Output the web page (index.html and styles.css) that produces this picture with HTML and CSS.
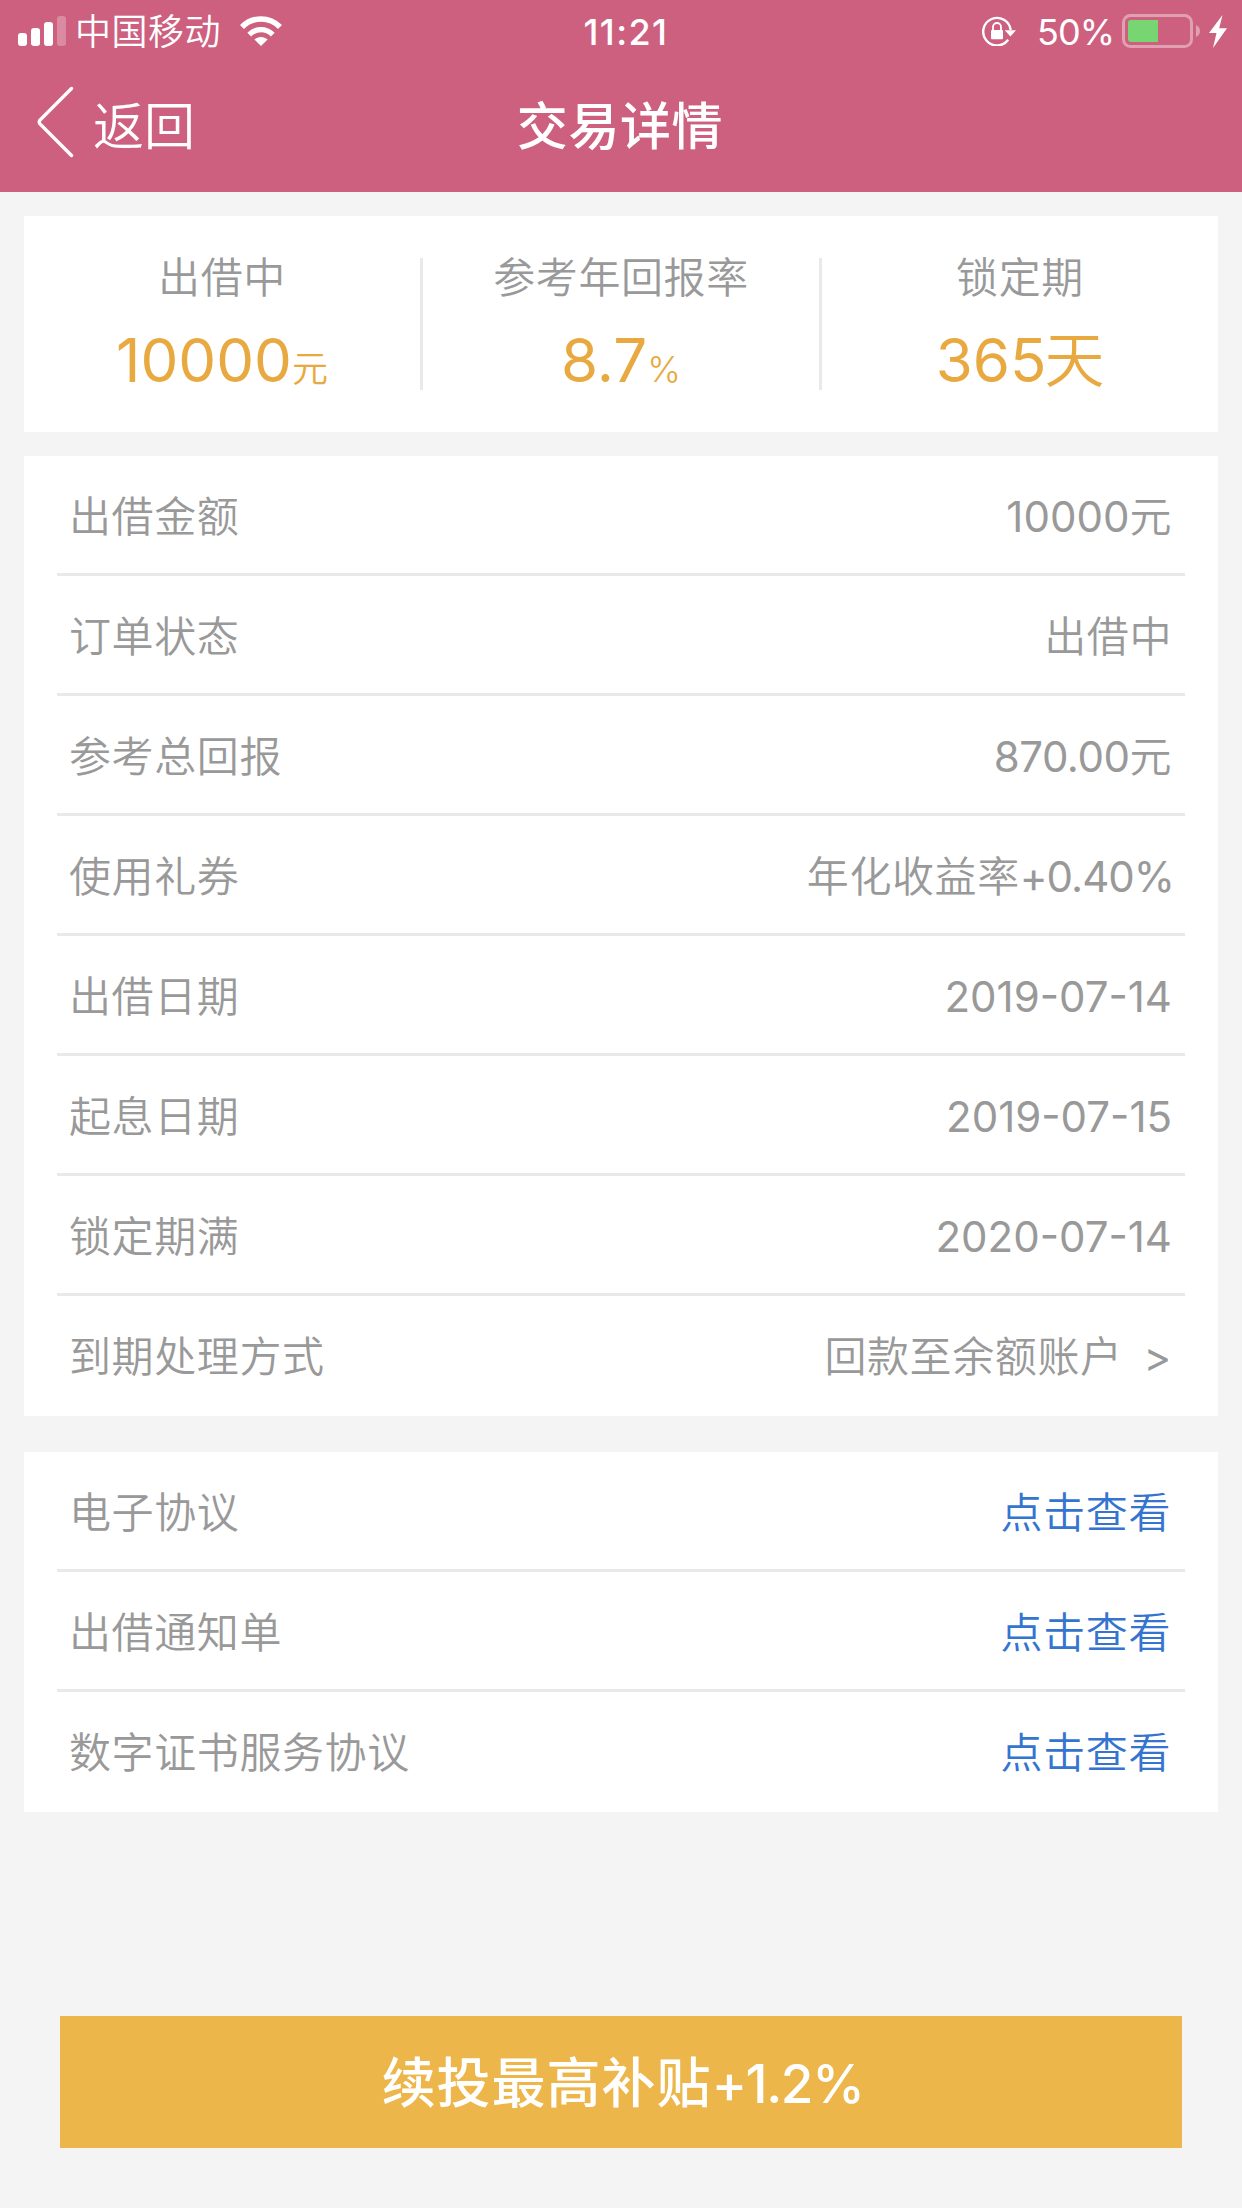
FILE: index.html
```html
<!DOCTYPE html>
<html lang="zh-CN">
<head>
<meta charset="UTF-8" />
<meta name="viewport" content="width=device-width, initial-scale=1" />
<title>交易详情</title>
<link rel="stylesheet" href="styles.css">
</head>
<body>
  <header class="header">
    <div class="status-bar">
      <div class="status-left">
        <svg class="signal" width="48" height="30" viewBox="0 0 48 30" fill="#fff">
          <rect x="0" y="17" width="9" height="13" rx="3"/>
          <rect x="13" y="12" width="9" height="18" rx="3"/>
          <rect x="26" y="6" width="9" height="24" rx="3"/>
          <rect x="39" y="0" width="9" height="30" rx="3" opacity=".27"/>
        </svg>
        <span class="carrier">中国移动</span>
        <svg class="wifi" width="42" height="30" viewBox="0 0 42 30">
          <path d="M2 11 C12.5 .3 29.5 .3 40 11" fill="none" stroke="#fff" stroke-width="5.6"/>
          <path d="M9.2 18.6 C16 12 26 12 32.8 18.6" fill="none" stroke="#fff" stroke-width="5.4"/>
          <path d="M14.4 23.6 C18 20.2 24 20.2 27.6 23.6 L21 30 Z" fill="#fff"/>
        </svg>
      </div>
      <div class="time">11:21</div>
      <div class="status-right">
        <svg class="lock" width="34" height="30" viewBox="0 0 34 30">
          <path d="M26.2 23.8 A13.8 13.8 0 1 1 28.7 14" fill="none" stroke="#fff" stroke-width="2.4"/>
          <path d="M22.8 14.2 H34 L28.4 20.4 Z" fill="#fff"/>
          <rect x="9" y="14" width="12" height="9.3" rx="1" fill="#fff"/>
          <path d="M11 14.5 V11 a4 4 0 0 1 8 0 V14.5" fill="none" stroke="#fff" stroke-width="1.8"/>
        </svg>
        <span class="percent">50%</span>
        <svg class="battery" width="78" height="34" viewBox="0 0 78 34">
          <rect x="1.5" y="1.5" width="68" height="31" rx="7" fill="none" stroke="#fff" stroke-opacity=".4" stroke-width="3"/>
          <path d="M9 6 H36 V28 H9 a3 3 0 0 1 -3 -3 V9 a3 3 0 0 1 3 -3 Z" fill="#77d572"/>
          <path d="M74 11 Q78 13 78 17 Q78 21 74 23 Z" fill="#fff" fill-opacity=".4"/>
        </svg>
        <svg class="bolt" width="18" height="33" viewBox="0 0 18 33">
          <path d="M13.5 0 L0 18 H7.5 L4 33 L18 13.2 H10.2 Z" fill="#fff"/>
        </svg>
      </div>
    </div>
    <div class="nav-bar">
      <a class="back" href="#">
        <svg class="chevron" width="37" height="72" viewBox="0 0 37 72">
          <path d="M34.5 2.5 L3 34 Q1.5 36 3 38 L34.5 69.5" fill="none" stroke="#fff" stroke-width="3.4" stroke-linecap="round"/>
        </svg>
        <span>返回</span>
      </a>
      <h1 class="title">交易详情</h1>
    </div>
  </header>

  <main class="content">
    <section class="card summary">
      <div class="summary-item">
        <div class="label">出借中</div>
        <div class="value">10000<small>元</small></div>
      </div>
      <div class="summary-item">
        <div class="label">参考年回报率</div>
        <div class="value">8.7<small>%</small></div>
      </div>
      <div class="summary-item">
        <div class="label">锁定期</div>
        <div class="value">365<span class="unit">天</span></div>
      </div>
    </section>

    <section class="card list">
      <div class="row"><span>出借金额</span><span><span class="num">10000</span>元</span></div>
      <div class="row"><span>订单状态</span><span>出借中</span></div>
      <div class="row"><span>参考总回报</span><span><span class="num amount">870.00</span>元</span></div>
      <div class="row"><span>使用礼券</span><span>年化收益率<span class="num rate">+0.40%</span></span></div>
      <div class="row"><span>出借日期</span><span class="num">2019-07-14</span></div>
      <div class="row"><span>起息日期</span><span class="num">2019-07-15</span></div>
      <div class="row"><span>锁定期满</span><span class="num">2020-07-14</span></div>
      <div class="row"><span>到期处理方式</span><span>回款至余额账户<span class="arrow">&gt;</span></span></div>
    </section>

    <section class="card list links">
      <div class="row"><span>电子协议</span><a href="#">点击查看</a></div>
      <div class="row"><span>出借通知单</span><a href="#">点击查看</a></div>
      <div class="row"><span>数字证书服务协议</span><a href="#">点击查看</a></div>
    </section>
  </main>

  <footer class="footer">
    <button class="btn">续投最高补贴<span class="btn-num">+1.2%</span></button>
  </footer>
</body>
</html>
```
FILE: styles.css
```css
* {
  box-sizing: border-box;
}
body {
  margin: 0;
  height: 2208px;
  display: flex;
  flex-direction: column;
  background: #f4f4f4;
  color: #999;
  font-family: Inter, "Noto Sans CJK SC", sans-serif;
  font-size: 42px;
  font-weight: 350;
}
a {
  color: inherit;
  text-decoration: none;
}
svg {
  display: block;
  flex: none;
}

/* header */
.header {
  height: 192px;
  background: #ce607f;
  color: #fff;
}
.status-bar {
  height: 60px;
  padding: 0 15px 0 18px;
  display: grid;
  grid-template-columns: 1fr auto 1fr;
  align-items: center;
  font-size: 36px;
  line-height: 60px;
}
.status-left,
.status-right {
  display: flex;
  align-items: center;
}
.status-right {
  justify-content: flex-end;
}
.carrier {
  margin: 0 19px 0 9px;
  padding-top: 2px;
  letter-spacing: 0.5px;
}
.time {
  padding: 1px 0 0 7px;
  font-weight: 500;
  letter-spacing: 1.4px;
}
.percent {
  margin: 0 8px 0 21px;
  padding-top: 1px;
  font-weight: 380;
  letter-spacing: -1px;
}
.bolt {
  margin-left: 9px;
}
.nav-bar {
  height: 132px;
  padding: 0 36px;
  display: grid;
  grid-template-columns: 1fr auto 1fr;
  align-items: center;
  font-size: 51px;
  line-height: 126px;
}
.back {
  display: flex;
  align-items: center;
  gap: 19px;
}
.back span {
  padding-top: 2px;
}
.chevron {
  margin: -8px 0 0 1px;
}
.title {
  margin: 0 2px 0 0;
  padding-top: 2px;
  font-size: 51px;
  font-weight: 500;
  letter-spacing: 0.6px;
}

/* cards */
.content {
  padding: 24px 24px 0;
}
.card {
  background: #fff;
}
.summary {
  height: 216px;
  padding: 42px 0;
  display: grid;
  grid-template-columns: 399px 399px 396px;
  grid-template-rows: 132px;
  text-align: center;
}
.summary-item {
  border-right: 3px solid #e9e9e9;
}
.summary-item:last-child {
  border-right: 0;
}
.label {
  padding-top: 1px;
  line-height: 38px;
  letter-spacing: 0.6px;
}
.value {
  margin-top: 25px;
  color: #e9a941;
  font-size: 60px;
  font-weight: 390;
  line-height: 76px;
}
.value small {
  font-size: 36px;
  font-weight: 350;
}
.unit {
  margin-left: -2px;
  font-weight: 350;
}
.list {
  margin-top: 24px;
  padding: 0 33px;
}
.links {
  margin-top: 36px;
}
.row {
  height: 120px;
  padding: 5px 13px 0 12px;
  display: flex;
  justify-content: space-between;
  align-items: center;
  border-bottom: 3px solid #e9e9e9;
  line-height: 60px;
  letter-spacing: 0.6px;
  white-space: nowrap;
}
.row:last-child {
  border-bottom-color: transparent;
}
.num {
  font-weight: 390;
  letter-spacing: 0;
}
.amount {
  letter-spacing: -0.5px;
}
.rate {
  margin-right: -2px;
  letter-spacing: -1px;
}
.arrow {
  margin-left: 21px;
  font-weight: 400;
}
.links a {
  padding-right: 1px;
  color: #3574cf;
}

/* bottom button */
.footer {
  margin-top: auto;
  padding: 0 60px 60px;
}
.btn {
  display: block;
  width: 100%;
  height: 132px;
  padding: 0 0 6px 3px;
  border: 0;
  background: #edb64a;
  color: #fff;
  font: inherit;
  font-size: 54px;
  font-weight: 500;
  letter-spacing: 1px;
}
.btn-num {
  font-size: 53px;
  letter-spacing: -1.4px;
}
```
